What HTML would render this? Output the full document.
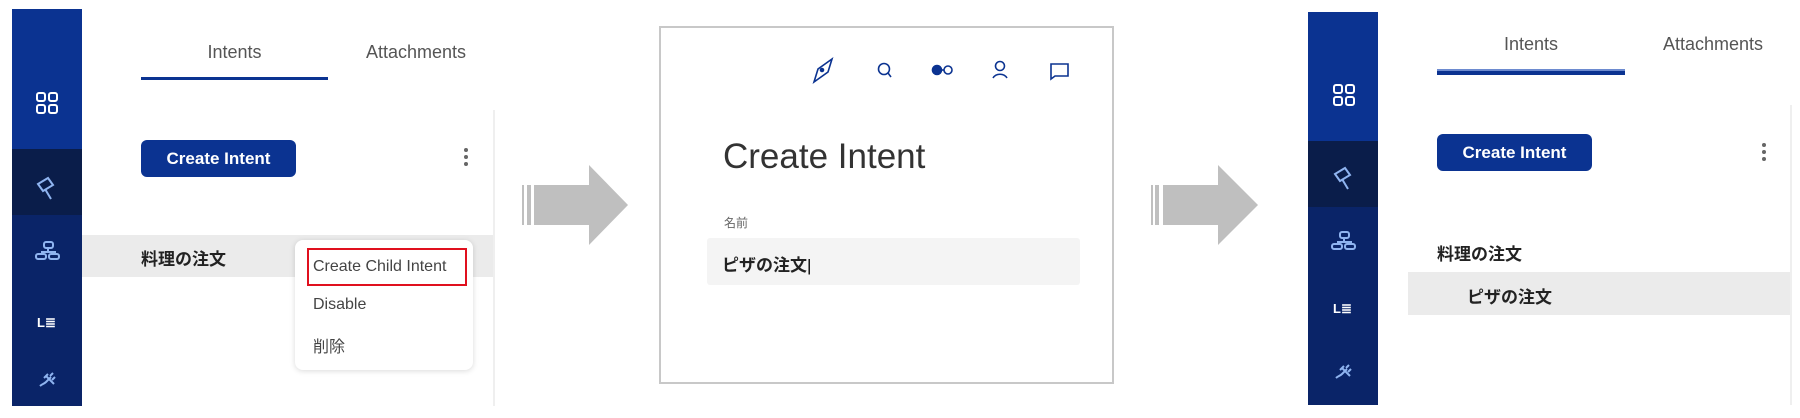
<!DOCTYPE html>
<html><head><meta charset="utf-8"><style>
*{margin:0;padding:0;box-sizing:border-box}
body{width:1800px;height:418px;background:#fff;position:relative;overflow:hidden;font-family:"Liberation Sans","Noto Sans CJK JP",sans-serif;color:#333}
.a{position:absolute}
.sb{position:absolute;width:70px}
.tab{position:absolute;font-size:18px;color:#555}
.btn{position:absolute;width:155px;height:37px;background:#0b3391;border-radius:6px;color:#fff;font-weight:bold;font-size:17px;text-align:center;line-height:37px}
.jp{font-weight:bold;font-size:17px;color:#222}
.dot{position:absolute;width:4px;height:4px;border-radius:2px;background:#666}
</style></head><body>

<!-- LEFT PANEL -->
<div class="sb" style="left:12px;top:9px;height:140px;background:#0b3391"></div>
<div class="sb" style="left:12px;top:149px;height:66px;background:#0a1d4a"></div>
<div class="sb" style="left:12px;top:215px;height:191px;background:#0a2468"></div>
<svg class="a" style="left:12px;top:9px" width="70" height="397" fill="none" stroke-width="2">
 <g stroke="#fff"><rect x="25" y="84" width="8" height="8" rx="2"/><rect x="37" y="84" width="8" height="8" rx="2"/><rect x="25" y="96" width="8" height="8" rx="2"/><rect x="37" y="96" width="8" height="8" rx="2"/></g>
 <g stroke="#8fb4f0"><path d="M26 175 l10 -6 l5 7 l-10 6 z M33 180 l6 10"/>
 <rect x="32" y="233" width="9" height="6" rx="2"/><path d="M36 239 v4 M29 243 h15"/><rect x="24" y="245" width="10" height="5" rx="2"/><rect x="37" y="245" width="10" height="5" rx="2"/>
 <path d="M28 377 c2 -2 4 -2 6 -4 m0 -6 l8 8 m-6 -10 l-4 4 m6 -2 l3 -3 m-1 7 l3 -3 M34 373 l5 -5"/></g>
 <text x="25" y="318" fill="#fff" font-size="13" font-family="Liberation Sans" font-weight="bold" stroke="none">L≣</text>
</svg>
<div class="tab" style="left:141px;top:42px;width:187px;text-align:center">Intents</div>
<div class="a" style="left:141px;top:77px;width:187px;height:3px;background:#0b3391"></div>
<div class="tab" style="left:366px;top:42px">Attachments</div>
<div class="a" style="left:493px;top:110px;width:2px;height:296px;background:#efefef"></div>
<div class="btn" style="left:141px;top:140px">Create Intent</div>
<div class="dot" style="left:464px;top:148px"></div><div class="dot" style="left:464px;top:155px"></div><div class="dot" style="left:464px;top:162px"></div>
<div class="a" style="left:82px;top:235px;width:411px;height:42px;background:#ebebeb"></div>
<div class="a jp" style="left:141px;top:245px">料理の注文</div>
<div class="a" style="left:295px;top:240px;width:178px;height:130px;background:#fff;border-radius:8px;box-shadow:0 1px 6px rgba(0,0,0,.15)"></div>
<div class="a" style="left:307px;top:248px;width:160px;height:38px;border:2px solid #e0101e"></div>
<div class="a" style="left:313px;top:258px;font-size:16px;color:#444">Create Child Intent</div>
<div class="a" style="left:313px;top:296px;font-size:16px;color:#444">Disable</div>
<div class="a" style="left:313px;top:333px;font-size:16px;color:#444">削除</div>

<!-- ARROWS -->
<svg class="a" style="left:520px;top:160px" width="112" height="90"><g fill="#bfbfbf"><rect x="2" y="25" width="2" height="40"/><rect x="7" y="25" width="4" height="40"/><path d="M14 25 H69 V5 L108 45 L69 85 V65 H14 z"/></g></svg>
<svg class="a" style="left:1150px;top:160px" width="112" height="90"><g fill="#bfbfbf"><rect x="1" y="25" width="2" height="40"/><rect x="5" y="25" width="4" height="40"/><path d="M13 25 H68 V5 L108 45 L68 85 V65 H13 z"/></g></svg>

<!-- MODAL -->
<div class="a" style="left:659px;top:26px;width:455px;height:358px;border:2px solid #c8c8c8"></div>
<svg class="a" style="left:800px;top:50px" width="290" height="40" fill="none" stroke="#0b3391" stroke-width="1.6">
 <path d="M14 32 l4 -13 l14 -10 l-4 13 z"/><circle cx="22" cy="20" r="1.5" fill="#0b3391"/>
 <circle cx="84" cy="19" r="5.5"/><path d="M88 23 l3 4"/>
 <circle cx="137" cy="20" r="4.5" fill="#0b3391"/><path d="M141 20 h3"/><circle cx="148" cy="20" r="4"/>
 <circle cx="200" cy="16" r="4.5"/><path d="M193 28 c3 -5 11 -5 14 0"/>
 <path d="M251 14 h17 v12 h-13 l-4 3 z"/>
</svg>
<div class="a" style="left:723px;top:137px;font-size:35px;color:#333">Create Intent</div>
<div class="a" style="left:724px;top:214px;font-size:12px;color:#666">名前</div>
<div class="a" style="left:707px;top:238px;width:373px;height:47px;background:#f4f4f4;border-radius:3px"></div>
<div class="a jp" style="left:722px;top:251px">ピザの注文<span style="font-weight:normal;color:#000">|</span></div>

<!-- RIGHT PANEL -->
<div class="sb" style="left:1308px;top:12px;height:129px;background:#0b3391"></div>
<div class="sb" style="left:1308px;top:141px;height:66px;background:#0a1d4a"></div>
<div class="sb" style="left:1308px;top:207px;height:198px;background:#0a2468"></div>
<svg class="a" style="left:1308px;top:12px" width="70" height="393" fill="none" stroke-width="2">
 <g stroke="#fff"><rect x="26" y="73" width="8" height="8" rx="2"/><rect x="38" y="73" width="8" height="8" rx="2"/><rect x="26" y="85" width="8" height="8" rx="2"/><rect x="38" y="85" width="8" height="8" rx="2"/></g>
 <g stroke="#8fb4f0"><path d="M27 162 l10 -6 l5 7 l-10 6 z M34 167 l6 10"/>
 <rect x="32" y="220" width="9" height="6" rx="2"/><path d="M36 226 v4 M29 230 h15"/><rect x="24" y="232" width="10" height="5" rx="2"/><rect x="37" y="232" width="10" height="5" rx="2"/>
 <path d="M28 366 c2 -2 4 -2 6 -4 m0 -6 l8 8 m-6 -10 l-4 4 m6 -2 l3 -3 m-1 7 l3 -3 M34 362 l5 -5"/></g>
 <text x="25" y="301" fill="#fff" font-size="13" font-family="Liberation Sans" font-weight="bold" stroke="none">L≣</text>
</svg>
<div class="tab" style="left:1437px;top:34px;width:188px;text-align:center">Intents</div>
<div class="a" style="left:1437px;top:69px;width:188px;height:6px;background:#0b3391;border-top:2px solid #6d8bd0"></div>
<div class="tab" style="left:1663px;top:34px">Attachments</div>
<div class="a" style="left:1790px;top:105px;width:2px;height:300px;background:#efefef"></div>
<div class="btn" style="left:1437px;top:134px">Create Intent</div>
<div class="dot" style="left:1762px;top:143px"></div><div class="dot" style="left:1762px;top:150px"></div><div class="dot" style="left:1762px;top:157px"></div>
<div class="a jp" style="left:1437px;top:240px">料理の注文</div>
<div class="a" style="left:1408px;top:272px;width:382px;height:43px;background:#ebebeb"></div>
<div class="a jp" style="left:1467px;top:283px">ピザの注文</div>
</body></html>
